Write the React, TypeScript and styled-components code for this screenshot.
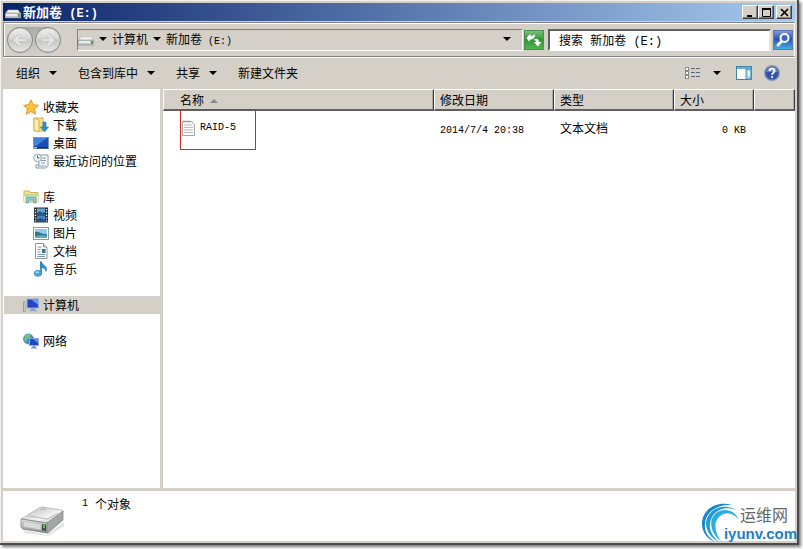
import React from "react";
import styled, { createGlobalStyle, css } from "styled-components";

const face = "#d4d0c8";
const cjk = '"Noto Sans CJK SC", sans-serif';

const GlobalStyle = createGlobalStyle`
  * { box-sizing: border-box; }
  body {
    margin: 0;
    background: #fff;
    color: #000;
    font: 12px/18px ${cjk};
  }
  button, input { font: inherit; color: inherit; }
`;

const Page = styled.div`
  display: flex;
  min-height: 100vh;
  padding: 0 4px 4px 0;
`;

const Window = styled.main`
  position: relative;
  flex: 1;
  min-width: 0;
  display: flex;
  flex-direction: column;
  padding: 3px 2px 2px 3px;
  background: ${face};
  border-right: 2px solid #4c4c50;
  border-bottom: 2px solid #4c4c50;
  box-shadow: 2px 2px 3px #777, inset 1px 1px 0 #f4f2ee;
`;

const Mono = styled.span`
  font-family: "Liberation Mono", monospace;
  font-size: 10px;
  line-height: 1;
  white-space: pre;
`;

const TitleBar = styled.header`
  display: flex;
  align-items: center;
  height: 18px;
  padding: 0 3px 0 2px;
  background: linear-gradient(90deg, #0a246a, #a6caf0);
  color: #fff;
`;

const Title = styled.h1`
  flex: 1;
  margin: 0 0 0 2px;
  font-size: 13px;
  line-height: 18px;
  font-weight: bold;
  white-space: pre;
  ${Mono} { font-size: 12px; }
`;

const CaptionButton = styled.button<{ $apart?: boolean }>`
  display: grid;
  place-items: center;
  width: 16px;
  height: 14px;
  margin-left: ${(p) => (p.$apart ? 2 : 0)}px;
  padding: 0;
  background: ${face};
  border: 1px solid;
  border-color: #fff #404040 #404040 #fff;
  box-shadow: inset -1px -1px 0 #808080;
`;

const NavBar = styled.div`
  display: flex;
  align-items: center;
  height: 35px;
  margin-top: 1px;
  padding: 0 1px 0 3px;
  border: 1px solid;
  border-color: #808080 #fff #808080 #808080;
  box-shadow: inset 1px 1px 0 #fff, 0 1px 0 #fff;
`;

const TravelButtons = styled.div`
  display: flex;
  gap: 2px;
  border-radius: 13px;
  background: linear-gradient(#a9a9a6, #d0cec8);
`;

const TravelButton = styled.button`
  display: grid;
  place-items: center;
  width: 26px;
  height: 26px;
  padding: 0;
  border: 1px solid #85857f;
  border-radius: 50%;
  background: linear-gradient(#eeeeec, #d6d6d4 45%, #c6c6c3 50%, #e6e6e4);
  box-shadow: inset 0 0 0 1px #d8d8d6;
`;

const sunken = css`
  border: 1px solid;
  border-color: #808080 #fff #fff #808080;
`;

const AddressBar = styled.nav`
  ${sunken}
  flex: 1;
  min-width: 0;
  display: flex;
  align-items: center;
  height: 22px;
  margin-left: 16px;
  padding-bottom: 2px;
`;

const CrumbList = styled.span`
  display: flex;
  align-items: center;
  margin-left: 4px;
`;

const Crumb = styled.a`
  margin: 0 4px;
  color: inherit;
  text-decoration: none;
  white-space: pre;
  line-height: 18px;
`;

const ArrowButton = styled.button`
  display: grid;
  place-items: center;
  width: 10px;
  height: 18px;
  padding: 0;
  border: 0;
  background: none;
`;

const HistoryButton = styled(ArrowButton)`
  width: 20px;
  margin: 0 5px 0 auto;
`;

const SquareButton = styled.button`
  display: grid;
  place-items: center;
  flex: none;
  width: 21px;
  height: 22px;
  padding: 0;
  border: 0;
  background: none;
`;

const SearchForm = styled.form`
  display: flex;
  align-items: center;
  width: 245px;
  margin-left: 4px;
`;

const SearchInput = styled.input`
  flex: 1;
  min-width: 0;
  height: 22px;
  margin: 0 1px 0 0;
  padding: 0 9px;
  border: 2px solid;
  border-color: #606060 #e8e6e0 #fff #606060;
  border-radius: 0;
  outline: 0;
  background: #fff;
  font-family: "Liberation Mono", ${cjk};
`;

const CommandBar = styled.div`
  display: flex;
  align-items: center;
  height: 32px;
  padding: 0 15px 0 13px;
`;

const Command = styled.button<{ $gap: number }>`
  display: flex;
  align-items: center;
  gap: 9px;
  margin: 0 ${(p) => p.$gap}px 0 0;
  padding: 0;
  border: 0;
  background: none;
  line-height: 18px;
`;

const Spacer = styled.span`
  flex: 1;
`;

const Body = styled.div`
  flex: 1;
  display: flex;
  gap: 3px;
`;

const Sidebar = styled.aside`
  width: 157px;
  padding-top: 9px;
  background: #fff;
`;

const Tree = styled.ul`
  margin: 0 0 18px;
  padding: 0;
  list-style: none;
`;

const TreeItem = styled.a<{ $child?: boolean; $selected?: boolean }>`
  display: flex;
  align-items: center;
  gap: 4px;
  height: 18px;
  margin-left: 1px;
  padding-left: ${(p) => (p.$child ? 29 : 19)}px;
  background: ${(p) => (p.$selected ? face : "none")};
  color: inherit;
  text-decoration: none;
`;

const ListPane = styled.section`
  flex: 1;
  min-width: 0;
  background: #fff;
`;

const FileTable = styled.table`
  width: 100%;
  table-layout: fixed;
  border-collapse: separate;
  border-spacing: 0;
`;

const HeadCell = styled.th<{ $width?: number; $inset?: number }>`
  width: ${(p) => (p.$width ? `${p.$width}px` : "auto")};
  height: 22px;
  padding: 1px 0 0 ${(p) => p.$inset ?? 5}px;
  background: ${face};
  border: solid;
  border-width: 1px 1px 2px 1px;
  border-color: #fff #404040 #606060 #fff;
  box-shadow: inset -1px 0 0 #a8a59e;
  font-weight: normal;
  text-align: left;
  line-height: 18px;
`;

const SortArrow = styled.svg`
  margin-left: 6px;
  vertical-align: 2px;
`;

const Cell = styled.td<{ $end?: boolean }>`
  position: relative;
  height: 34px;
  padding: 0 ${(p) => (p.$end ? 8 : 0)}px 0 6px;
  text-align: ${(p) => (p.$end ? "right" : "left")};
  white-space: nowrap;
`;

const FileName = styled.a`
  display: flex;
  align-items: center;
  gap: 3px;
  padding-left: 12px;
  color: inherit;
  text-decoration: none;
`;

const Highlight = styled.span`
  position: absolute;
  z-index: 1;
  left: 17px;
  top: -2px;
  width: 76px;
  height: 41px;
  border: 1px solid #cc2a2a;
  pointer-events: none;
`;

const DetailsPane = styled.footer`
  display: flex;
  height: 50px;
  margin-top: 3px;
  padding: 4px 0 0 16px;
  gap: 15px;
  background: #fff;
`;

const Count = styled.p`
  display: flex;
  align-items: center;
  gap: 7px;
  margin: 0;
  height: 18px;
  padding-left: 2px;
`;

const Watermark = styled.div`
  position: absolute;
  right: 0;
  bottom: 0;
  display: flex;
  align-items: flex-end;
`;

const WatermarkText = styled.div`
  margin-left: -18px;
  color: #1b7fcb;
  font: bold 15px/18px "Liberation Sans", sans-serif;
`;

const WatermarkName = styled.div`
  padding-left: 16px;
  color: #666;
  font: 16px/22px ${cjk};
`;

const Down = () => (
  <svg width="8" height="4" viewBox="0 0 8 4" aria-hidden>
    <path d="M0 0h8L4 4z" fill="#000" />
  </svg>
);

const DriveSmall = () => (
  <svg width="16" height="14" viewBox="0 0 16 14" aria-hidden>
    <path d="M3 5h10l3 4H0z" fill="#f5f5f5" stroke="#bbb" strokeWidth=".6" />
    <rect x="0" y="8" width="16" height="5" rx="1" fill="#c5c7ca" stroke="#808286" strokeWidth=".6" />
    <path d="M1 9h11v2H1z" fill="#eee" />
    <path d="M13 9h2v3h-2z" fill="#4fa64b" />
  </svg>
);

const TravelArrow = ({ forward }: { forward?: boolean }) => (
  <svg width="16" height="14" viewBox="0 0 16 14" aria-hidden>
    <path
      d={forward ? "M2 7h11M8 2l5 5-5 5" : "M14 7H3M8 2L3 7l5 5"}
      fill="none" stroke="#bdbdba" strokeWidth="4" />
    <path
      d={forward ? "M2 7h11M8 2l5 5-5 5" : "M14 7H3M8 2L3 7l5 5"}
      fill="none" stroke="#e4e4e2" strokeWidth="2.600" />
  </svg>
);

const RefreshIcon = () => (
  <svg width="20" height="20" viewBox="0 0 20 20" aria-hidden>
    <defs>
      <linearGradient id="green" x1="0" y1="0" x2="0" y2="1">
        <stop offset="0" stopColor="#7cc47a" />
        <stop offset=".5" stopColor="#2f9636" />
        <stop offset="1" stopColor="#56b74f" />
      </linearGradient>
    </defs>
    <rect x=".5" y=".5" width="19" height="19" fill="url(#green)" stroke="#4b8d4b" />
    <path d="M2.500 8.500l3.500-5V6c0 0 4-1 4.500-3 .5 4-1 6-4.500 6.500V12z" fill="#fff" transform="rotate(8 6 8)" />
    <path d="M9.500 10c3-2 5-1.500 5.500 2h2.500l-3.700 4.500L10 12h2.200c0-1.200-1-2-2.700-2z" fill="#fff" />
  </svg>
);

const SearchIcon = () => (
  <svg width="20" height="20" viewBox="0 0 20 20" aria-hidden>
    <defs>
      <linearGradient id="blue" x1="0" y1="0" x2="0" y2="1">
        <stop offset="0" stopColor="#8a9ede" />
        <stop offset=".45" stopColor="#2754b4" />
        <stop offset="1" stopColor="#45b4e4" />
      </linearGradient>
    </defs>
    <rect x=".5" y=".5" width="19" height="19" fill="url(#blue)" stroke="#5878b4" />
    <path d="M9 11l-4 4" stroke="#fff" strokeWidth="3" strokeLinecap="round" />
    <circle cx="11.500" cy="8" r="4" fill="#3c66bd" stroke="#fff" strokeWidth="2" />
  </svg>
);

const ViewIcon = () => (
  <svg width="16" height="12" viewBox="0 0 16 12" aria-hidden>
    {[0, 4, 8].map((y) => (
      <g key={y}>
        <rect x=".5" y={y + 0.5} width="3" height="3" fill="#fff" stroke="#888" />
        <path d={`M6 ${y + 1.5}h4M11 ${y + 1.5}h4`} stroke="#5c6878" />
      </g>
    ))}
  </svg>
);

const PaneIcon = () => (
  <svg width="16" height="14" viewBox="0 0 16 14" aria-hidden>
    <rect x=".5" y=".5" width="15" height="13" fill="#fff" stroke="#4085a8" />
    <path d="M1 1h14v2H1z" fill="#6aaed0" />
    <path d="M10 3h5v10h-5z" fill="#a4d5eb" stroke="#4b93b6" />
    <path d="M12 5h2v5h-2z" fill="#f3fbff" />
  </svg>
);

const HelpIcon = () => (
  <svg width="16" height="16" viewBox="0 0 16 16" aria-hidden>
    <circle cx="8" cy="8" r="7.300" fill="#2f54a8" stroke="#8795ba" strokeWidth="1.400" />
    <path d="M2.500 7a5.500 5.500 0 0 1 11 0z" fill="#6584c6" />
    <path d="M5.500 6c0-3.200 5-3.200 5 0 0 1.800-2.400 1.800-2.400 3.800" fill="none" stroke="#fff" strokeWidth="1.800" />
    <circle cx="8.100" cy="12" r="1.100" fill="#fff" />
  </svg>
);

const art: Record<string, React.ReactNode> = {
  star: <path d="M8 .8l2.200 4.900 5.300.6-4 3.600 1.200 5.300L8 12.500l-4.700 2.700 1.200-5.300-4-3.600 5.300-.6z" fill="#fcc33c" stroke="#e8962a" />,
  download: (
    <>
      <path d="M1 1h9v13H1z" fill="#f7dd83" stroke="#d3b356" />
      <path d="M1 1l5 2v12l-5-2z" fill="#fff0ad" stroke="#d3b356" />
      <path d="M10 5h3v5h2.500L11.500 15 7.500 10H10z" fill="#2b8fd0" stroke="#2474b0" strokeWidth=".6" />
    </>
  ),
  desktop: (
    <>
      <rect x=".5" y="2.500" width="15" height="11" fill="#1c4fb4" stroke="#7794bd" />
      <path d="M1 3h13L3 11H1z" fill="#3f83d8" />
      <path d="M1 12h14v1.500H1z" fill="#1b2c50" />
      <path d="M1 12h3v1.500H1z" fill="#86d0e8" />
    </>
  ),
  recent: (
    <>
      <path d="M5 2h10v11l-2 2H3v-3h3z" fill="#f7fafc" stroke="#8798a8" />
      <path d="M8 5h5M8 7.500h5M8 10h4M5 13h8" stroke="#7c9ebe" />
      <circle cx="4.500" cy="5" r="3.800" fill="#edf4f7" stroke="#9aabb8" />
      <path d="M4.500 2.500V5h2" fill="none" stroke="#567" />
    </>
  ),
  library: (
    <>
      <path d="M1 2h5l1 1.500h8V13H1z" fill="#f5df8c" stroke="#cdb157" />
      <path d="M2 5h13v3H2z" fill="#b8dc9f" />
      <path d="M3 14V8.500h10V14h-2.500v-3h-5v3z" fill="#8bcbe4" stroke="#5b9fb8" strokeWidth=".7" />
      <path d="M1 7h1.500v6H1zM14 7h1v6h-1z" fill="#fff2b4" />
    </>
  ),
  video: (
    <>
      <rect x="1" y=".5" width="14" height="15" fill="#2a3038" />
      <path d="M4 1.500h8v6H4z" fill="#64a5d4" />
      <path d="M4 8.500h8v6H4z" fill="#4083c0" />
      <path d="M4 6l3-2 2 2 3-1v2.500H4zM4 13l3-2 5 2v1.500H4z" fill="#20537f" />
      <path d="M2.500 2v13M13.500 2v13" stroke="#e8eef2" strokeWidth="1.300" strokeDasharray="1.300 1.500" />
    </>
  ),
  picture: (
    <>
      <rect x=".5" y="2.500" width="15" height="12" fill="#fff" stroke="#8a9ba8" />
      <path d="M2 4h12v9H2z" fill="#92cbe8" />
      <path d="M2 7c4-1 7 3 12 2v4H2z" fill="#2e7697" />
      <path d="M2 11c5-1 8-1 12 0v2H2z" fill="#5baabd" />
    </>
  ),
  document: (
    <>
      <path d="M2.500.5h8l3.500 3.500v11.500H2.500z" fill="#fff" stroke="#8a98a5" />
      <path d="M10.500.5V4H14" fill="#dde6ed" stroke="#8a98a5" />
      <path d="M4.500 4h4M4.500 6.500h3M4.500 9h3M4.500 11.500h7.500M4.500 13.500h7.500" stroke="#7d92a4" />
      <path d="M9 6h3.500v4H9z" fill="#466f96" />
    </>
  ),
  music: (
    <>
      <path d="M8 .5c.5 3 7.500 4 5 10-.3-2.500-2-3.500-5-4z" fill="#3898dc" stroke="#2277b5" strokeWidth=".6" />
      <path d="M8 .5V12" stroke="#2277b5" strokeWidth="1.600" />
      <ellipse cx="5" cy="12.300" rx="3.800" ry="3" fill="#45a5e4" stroke="#2277b5" strokeWidth=".6" />
      <ellipse cx="4.300" cy="11.300" rx="1.800" ry="1" fill="#a5dafa" />
    </>
  ),
  computer: (
    <>
      <path d="M.5 4.500H2v10H.5z" fill="#eee" stroke="#858b94" strokeWidth=".8" />
      <rect x="4" y="2" width="11.500" height="9" fill="#2545c2" stroke="#9aaeda" />
      <path d="M8 2.500h7v5z" fill="#6f9bf0" />
      <path d="M8 11h4v2h2v1.300H6V13h2z" fill="#8e9fc3" />
    </>
  ),
  network: (
    <>
      <circle cx="5.500" cy="6" r="5" fill="#3a93c6" stroke="#2b6fa0" strokeWidth=".6" />
      <path d="M2 3c2-2 5-2 6-1L6 5 4 6 3 9C1 8 .8 5 2 3z" fill="#7cc47f" />
      <rect x="6.500" y="5.500" width="9" height="7" fill="#1f48c4" stroke="#8fa6d8" />
      <path d="M10 6h5v4z" fill="#6390ee" />
      <path d="M9.500 13h3v1.500H14v1H8v-1h1.500z" fill="#7689b5" />
    </>
  ),
  text: (
    <>
      <path d="M1.500 1.500h9l3 3v11h-12z" fill="#fafafa" stroke="#a5a5a5" />
      <path d="M3 5h8M3 7.500h9M3 10h9M3 12.500h9" stroke="#b4bcc0" />
      <path d="M3 .5v2M5 .5v2M7 .5v2M9 .5v2" stroke="#888" strokeWidth=".8" />
    </>
  ),
};

const Icon = ({ name }: { name: string }) => (
  <svg width="16" height="16" viewBox="0 0 16 16" aria-hidden>{art[name]}</svg>
);

const DriveLarge = () => (
  <svg width="46" height="42" viewBox="0 0 46 42" aria-hidden>
    <defs>
      <linearGradient id="top" x1="0" y1="0" x2="1" y2="1">
        <stop offset="0" stopColor="#b5b5b5" />
        <stop offset=".6" stopColor="#f2f2f2" />
        <stop offset="1" stopColor="#c4c4c4" />
      </linearGradient>
      <linearGradient id="front" x1="0" y1="0" x2="0" y2="1">
        <stop offset="0" stopColor="#f4f4f4" />
        <stop offset="1" stopColor="#858789" />
      </linearGradient>
    </defs>
    <path d="M4 35l24 5 17-13v4L29 41 6 38z" fill="#e2e2e2" />
    <path d="M2 24L20 13q2-1 4-1l19 3q2 1 1 2L29 28z" fill="url(#top)" stroke="#aaa" strokeWidth=".7" />
    <path d="M2 24l26 4v10L4 34q-2-1-2-3z" fill="url(#front)" stroke="#77797b" strokeWidth=".8" />
    <path d="M28 28l16-12v9L29 38h-1z" fill="#a3a5a7" stroke="#808284" strokeWidth=".7" />
    <path d="M4 26l18 3v6L5 32z" fill="#d9dadc" stroke="#a0a2a5" strokeWidth=".5" />
    <path d="M23 29l4 .6V36l-4-.8z" fill="#40523f" />
    <path d="M24 29.500h2V33h-2z" fill="#52c83e" />
    <path d="M21 15q3-2 6 0M10 21l19 3 10-6" fill="none" stroke="#999" strokeWidth=".6" />
  </svg>
);

const Swirl = () => (
  <svg width="40" height="40" viewBox="0 0 40 40" aria-hidden>
    <path d="M30 2C13-3-1 8 0 22c.5 8 6 15 14 17C6 35 2 28 3 20 4 9 15 1 30 2z" fill="#1788ce" />
    <path d="M34 7C22-1 5 6 4 20c0 8 5 15 13 19C10 33 7 27 8 20 10 8 22 2 34 7z" fill="#1f9bd9" />
    <path d="M37 17C33 6 20 4 13 11 6 18 9 31 19 38 13 30 11 20 17 14c6-6 14-5 20 3z" fill="#2badde" />
  </svg>
);

type Node = { icon: string; label: string; child?: boolean; selected?: boolean };

const groups: Node[][] = [
  [
    { icon: "star", label: "收藏夹" },
    { icon: "download", label: "下载", child: true },
    { icon: "desktop", label: "桌面", child: true },
    { icon: "recent", label: "最近访问的位置", child: true },
  ],
  [
    { icon: "library", label: "库" },
    { icon: "video", label: "视频", child: true },
    { icon: "picture", label: "图片", child: true },
    { icon: "document", label: "文档", child: true },
    { icon: "music", label: "音乐", child: true },
  ],
  [{ icon: "computer", label: "计算机", selected: true }],
  [{ icon: "network", label: "网络" }],
];

export default function App() {
  return (
    <Page>
      <GlobalStyle />
      <Window>
        <TitleBar>
          <DriveSmall />
          <Title>新加卷<Mono> (E:)</Mono></Title>
          <CaptionButton aria-label="最小化">
            <svg width="9" height="9" viewBox="0 0 9 9"><path d="M1 7h5v2H1z" /></svg>
          </CaptionButton>
          <CaptionButton aria-label="最大化">
            <svg width="9" height="9" viewBox="0 0 9 9">
              <path d="M.5 1v7.500h8V1M0 1h9" fill="none" stroke="#000" />
              <path d="M0 0h9v2H0z" />
            </svg>
          </CaptionButton>
          <CaptionButton $apart aria-label="关闭">
            <svg width="9" height="9" viewBox="0 0 9 9">
              <path d="M1 1l7 7M8 1L1 8" stroke="#000" strokeWidth="1.700" />
            </svg>
          </CaptionButton>
        </TitleBar>

        <NavBar>
          <TravelButtons>
            <TravelButton aria-label="后退"><TravelArrow /></TravelButton>
            <TravelButton aria-label="前进"><TravelArrow forward /></TravelButton>
          </TravelButtons>
          <AddressBar aria-label="地址">
            <DriveSmall />
            <CrumbList>
              <ArrowButton aria-label="展开"><Down /></ArrowButton>
              <Crumb href="#">计算机</Crumb>
              <ArrowButton aria-label="展开计算机"><Down /></ArrowButton>
              <Crumb href="#">新加卷<Mono> (E:)</Mono></Crumb>
            </CrumbList>
            <HistoryButton aria-label="以前的位置"><Down /></HistoryButton>
          </AddressBar>
          <SquareButton aria-label="刷新"><RefreshIcon /></SquareButton>
          <SearchForm onSubmit={(e) => e.preventDefault()}>
            <SearchInput aria-label="搜索" defaultValue="搜索 新加卷 (E:)" />
            <SquareButton aria-label="开始搜索"><SearchIcon /></SquareButton>
          </SearchForm>
        </NavBar>

        <CommandBar>
          <Command $gap={21}>组织<Down /></Command>
          <Command $gap={21}>包含到库中<Down /></Command>
          <Command $gap={21}>共享<Down /></Command>
          <Command $gap={0}>新建文件夹</Command>
          <Spacer />
          <Command $gap={12} aria-label="更改视图"><ViewIcon /></Command>
          <Command $gap={15} aria-label="更多选项"><Down /></Command>
          <Command $gap={12} aria-label="预览窗格"><PaneIcon /></Command>
          <Command $gap={0} aria-label="帮助"><HelpIcon /></Command>
        </CommandBar>

        <Body>
          <Sidebar>
            {groups.map((nodes) => (
              <Tree key={nodes[0].label}>
                {nodes.map((n) => (
                  <li key={n.label}>
                    <TreeItem href="#" $child={n.child} $selected={n.selected}>
                      <Icon name={n.icon} />
                      {n.label}
                    </TreeItem>
                  </li>
                ))}
              </Tree>
            ))}
          </Sidebar>
          <ListPane>
            <FileTable>
              <thead>
                <tr>
                  <HeadCell $width={271} $inset={16}>
                    名称
                    <SortArrow width="8" height="4" viewBox="0 0 8 4" aria-hidden>
                      <path d="M0 4h8L4 0z" fill="#85898b" />
                    </SortArrow>
                  </HeadCell>
                  <HeadCell $width={120}>修改日期</HeadCell>
                  <HeadCell $width={120}>类型</HeadCell>
                  <HeadCell $width={80}>大小</HeadCell>
                  <HeadCell aria-label="其他" />
                </tr>
              </thead>
              <tbody>
                <tr>
                  <Cell>
                    <FileName href="#"><Icon name="text" /><Mono>RAID-5</Mono></FileName>
                    <Highlight />
                  </Cell>
                  <Cell><Mono>2014/7/4 20:38</Mono></Cell>
                  <Cell>文本文档</Cell>
                  <Cell $end><Mono>0 KB</Mono></Cell>
                  <Cell />
                </tr>
              </tbody>
            </FileTable>
          </ListPane>
        </Body>

        <DetailsPane>
          <DriveLarge />
          <Count><Mono>1</Mono>个对象</Count>
        </DetailsPane>

        <Watermark>
          <Swirl />
          <WatermarkText>
            <WatermarkName>运维网</WatermarkName>
            iyunv.com
          </WatermarkText>
        </Watermark>
      </Window>
    </Page>
  );
}
